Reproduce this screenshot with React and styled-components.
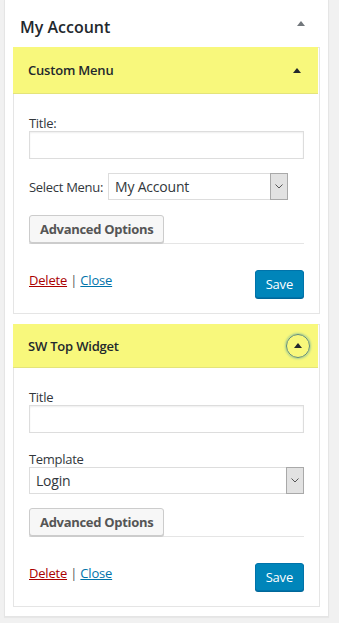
import React from 'react'
import styled, { createGlobalStyle } from 'styled-components'

const Global = createGlobalStyle`
  body {
    margin: 0;
    background: #f1f1f1;
    font-family: "Open Sans", "Noto Sans", sans-serif;
    color: #23282d;
  }
`

const Page = styled.div`
  padding: 0 10px 6px 4px;
`

const Sidebar = styled.div`
  background: #fff;
  border: 1px solid #e5e5e5;
  border-top: none;
  box-shadow: 0 1px 1px rgba(0, 0, 0, 0.04);
  padding: 0 8px 9px 8px;
`

const SidebarHead = styled.div`
  display: flex;
  align-items: center;
  justify-content: space-between;
  height: 47px;
  padding: 0 15px 0 7px;
`

const SidebarTitle = styled.h2`
  margin: 0;
  font-size: 16px;
  font-weight: 600;
  color: #23282d;
  padding-top: 6px;
`

const Arrow = styled.span`
  width: 0;
  height: 0;
  border-left: 4px solid transparent;
  border-right: 4px solid transparent;
  border-bottom: 5px solid ${p => p.$color || '#72777c'};
`

const Widget = styled.div`
  border: 1px solid #e5e5e5;
  background: #fff;
  & + & {
    margin-top: 10px;
  }
`

const WidgetHead = styled.div`
  display: flex;
  align-items: center;
  justify-content: space-between;
  background: #f8f87c;
  height: ${p => p.$h}px;
  padding: 0 ${p => p.$pr}px 0 15px;
  margin: -1px 1px 0 -1px;
  border-bottom: 1px solid #e4e47a;
`

const WidgetTitle = styled.span`
  font-size: 13px;
  font-weight: 600;
  letter-spacing: -0.2px;
  color: #23282d;
`

const Toggle = styled.span`
  display: flex;
  align-items: center;
  justify-content: center;
  box-sizing: border-box;
  width: 24px;
  height: 24px;
  border-radius: 50%;
  border: 1.5px solid #5d8a80;
  box-shadow: 0 0 2px 1px rgba(30, 140, 190, 0.35);
`

const Body = styled.div`
  padding: 21px 15px 15px 15px;
`

const Label = styled.div`
  font-size: 13px;
  letter-spacing: -0.3px;
  color: #32373c;
  line-height: 16px;
`

const Input = styled.input`
  display: block;
  box-sizing: border-box;
  width: 100%;
  height: 28px;
  border: 1px solid #ddd;
  box-shadow: inset 0 1px 2px rgba(0, 0, 0, 0.07);
  margin: 0 0 ${p => p.$mb}px 0;
  font: inherit;
`

const Row = styled.div`
  display: flex;
  align-items: center;
  gap: 5px;
`

const SelectBox = styled.div`
  display: flex;
  align-items: stretch;
  box-sizing: border-box;
  width: ${p => p.$w || '100%'};
  height: 27px;
  border: 1px solid #ddd;
  background: #fff;
`

const SelectValue = styled.span`
  flex: 1;
  display: flex;
  align-items: center;
  padding-left: 6px;
  font-size: 14px;
  letter-spacing: -0.2px;
  color: #32373c;
`

const SelectBtn = styled.span`
  width: 16px;
  display: flex;
  align-items: center;
  justify-content: center;
  background: #e2e2e2;
  border: 1px solid #a9a9a9;
  margin: -1px -1px -1px 0;
`

const Options = styled.div`
  border-bottom: 1px solid #e5e5e5;
  margin-top: ${p => p.$mt}px;
`

const OptionsBtn = styled.button`
  display: block;
  height: 28px;
  padding: 0 10px;
  background: #f7f7f7;
  border: 1px solid #ccc;
  border-radius: 3px;
  box-shadow: 0 1px 0 #ccc;
  font-family: inherit;
  font-size: 13px;
  font-weight: 700;
  letter-spacing: -0.3px;
  color: #555;
`

const Actions = styled.div`
  display: flex;
  justify-content: space-between;
  align-items: flex-start;
  margin-top: 26px;
`

const Links = styled.div`
  font-size: 13px;
  letter-spacing: -0.2px;
  line-height: 18px;
  color: #555;
  padding-top: 1px;
`

const Link = styled.a`
  color: ${p => (p.$danger ? '#a00' : '#0073aa')};
  text-decoration: underline;
`

const Save = styled.button`
  height: 28px;
  padding: 0 10px;
  background: #0085ba;
  border: 1px solid #0073aa;
  border-radius: 3px;
  box-shadow: 0 1px 0 #006799;
  color: #fff;
  font-family: inherit;
  font-size: 13px;
  letter-spacing: -0.2px;
`

const Chevron = () => (
  <svg width="8" height="5" viewBox="0 0 8 5">
    <path d="M0.5 0.5 L4 4 L7.5 0.5" fill="none" stroke="#555" strokeWidth="1" />
  </svg>
)

const Footer = () => (
  <Actions>
    <Links>
      <Link $danger href="#">Delete</Link> | <Link href="#">Close</Link>
    </Links>
    <Save>Save</Save>
  </Actions>
)

const App = () => (
  <>
    <Global />
    <Page>
      <Sidebar>
        <SidebarHead>
          <SidebarTitle>My Account</SidebarTitle>
          <Arrow />
        </SidebarHead>

        <Widget>
          <WidgetHead $h={46} $pr={17}>
            <WidgetTitle>Custom Menu</WidgetTitle>
            <Arrow $color="#23282d" />
          </WidgetHead>
          <Body>
            <Label>Title:</Label>
            <Input $mb={14} />
            <Row>
              <Label>Select Menu:</Label>
              <SelectBox $w="180px">
                <SelectValue>My Account</SelectValue>
                <SelectBtn><Chevron /></SelectBtn>
              </SelectBox>
            </Row>
            <Options $mt={15}>
              <OptionsBtn>Advanced Options</OptionsBtn>
            </Options>
            <Footer />
          </Body>
        </Widget>

        <Widget>
          <WidgetHead $h={43} $pr={8}>
            <WidgetTitle>SW Top Widget</WidgetTitle>
            <Toggle>
              <Arrow $color="#23282d" />
            </Toggle>
          </WidgetHead>
          <Body>
            <Label>Title</Label>
            <Input $mb={18} />
            <Label>Template</Label>
            <SelectBox>
              <SelectValue>Login</SelectValue>
              <SelectBtn><Chevron /></SelectBtn>
            </SelectBox>
            <Options $mt={14}>
              <OptionsBtn>Advanced Options</OptionsBtn>
            </Options>
            <Footer />
          </Body>
        </Widget>
      </Sidebar>
    </Page>
  </>
)

export default App
